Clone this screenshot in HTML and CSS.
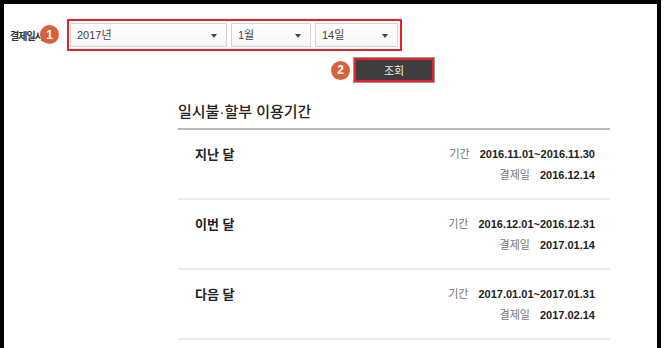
FILE: index.html
```html
<!DOCTYPE html>
<html lang="ko">

<head>
    <meta charset="UTF-8">
    <meta name="viewport" content="width=device-width, initial-scale=1.0">
    <title>일시불·할부 이용기간</title>
    <link rel="stylesheet" href="styles.css">
</head>

<body>
    <div class="frame">
        <div class="filtre">
            <div class="filtre_label">
                결제일시
                <span class="badge badge_un">1</span>
            </div>
            <div class="selects">
                <div class="select select_annee">2017년<span class="fleche"></span></div>
                <div class="select select_mois">1월<span class="fleche"></span></div>
                <div class="select select_jour">14일<span class="fleche"></span></div>
            </div>
        </div>

        <div class="ligne_bouton">
            <span class="badge">2</span>
            <button type="button" class="bouton_recherche">조회</button>
        </div>

        <div class="periodes">
            <h2>일시불·할부 이용기간</h2>

            <div class="periode">
                <div class="periode_nom">지난 달</div>
                <dl class="periode_infos">
                    <div><dt>기간</dt><dd>2016.11.01~2016.11.30</dd></div>
                    <div><dt>결제일</dt><dd>2016.12.14</dd></div>
                </dl>
            </div>

            <div class="periode">
                <div class="periode_nom">이번 달</div>
                <dl class="periode_infos">
                    <div><dt>기간</dt><dd>2016.12.01~2016.12.31</dd></div>
                    <div><dt>결제일</dt><dd>2017.01.14</dd></div>
                </dl>
            </div>

            <div class="periode">
                <div class="periode_nom">다음 달</div>
                <dl class="periode_infos">
                    <div><dt>기간</dt><dd>2017.01.01~2017.01.31</dd></div>
                    <div><dt>결제일</dt><dd>2017.02.14</dd></div>
                </dl>
            </div>
        </div>
    </div>
</body>

</html>
```

FILE: styles.css
```css
body {
    margin: 0;
    font-family: "Liberation Sans", "Noto Sans CJK KR", sans-serif;
    color: #222;
    background-color: #fff;
}

.frame {
    width: 653px;
    height: 337px;
    border: 4px solid #000;
    overflow: hidden;
    padding-top: 15px;
    box-sizing: content-box;
}

.frame > * {
    box-sizing: border-box;
}

/* ligne des selects */
.filtre {
    display: flex;
    align-items: center;
    padding-left: 6px;
}

.filtre_label {
    position: relative;
    width: 57px;
    flex-shrink: 0;
    font-size: 10px;
    font-weight: bold;
    letter-spacing: -1px;
    color: #333;
    white-space: nowrap;
}

.badge {
    display: inline-flex;
    align-items: center;
    justify-content: center;
    width: 19px;
    height: 19px;
    border-radius: 50%;
    background-color: #d9603a;
    color: #fff;
    font-size: 12px;
    font-weight: bold;
    letter-spacing: 0;
}

.badge_un {
    position: absolute;
    left: 30px;
    top: 50%;
    margin-top: -10px;
}

.selects {
    display: flex;
    gap: 4px;
    padding: 2px 2px 2px 1px;
    border: 2px solid #e8202a;
}

.select {
    position: relative;
    height: 24px;
    line-height: 22px;
    padding-left: 6px;
    border: 1px solid #d5d5d5;
    box-sizing: border-box;
    background: linear-gradient(#fff, #f6f6f6);
    font-size: 11px;
    color: #444;
}

.select_annee {
    width: 157px;
}

.select_mois {
    width: 80px;
}

.select_jour {
    width: 83px;
}

.fleche {
    position: absolute;
    right: 9px;
    top: 10px;
    border-left: 3px solid transparent;
    border-right: 3px solid transparent;
    border-top: 4px solid #444;
}

/* bouton */
.ligne_bouton {
    display: flex;
    align-items: center;
    gap: 4px;
    margin-top: 7px;
    padding-left: 327px;
}

.bouton_recherche {
    width: 80px;
    height: 24px;
    padding: 0;
    border: 2px solid #e8202a;
    outline: 1px solid #999;
    background-color: #3e3e3e;
    color: #eee;
    font-family: inherit;
    font-size: 11px;
}

/* liste des periodes */
.periodes {
    width: 432px;
    margin-left: 174px;
}

h2 {
    margin: 20px 0 0;
    padding-bottom: 6px;
    border-bottom: 2px solid #bbb;
    font-size: 15px;
    line-height: 20px;
    font-weight: 500;
    color: #222;
}

.periode {
    display: flex;
    justify-content: space-between;
    height: 70px;
    padding: 14px 15px 0 17px;
    border-bottom: 2px solid #ececec;
    box-sizing: border-box;
}

.periode_nom {
    font-size: 13px;
    line-height: 21px;
    font-weight: bold;
}

.periode_infos {
    display: flex;
    flex-direction: column;
    align-items: flex-end;
    margin: 0;
    line-height: 21px;
}

.periode_infos div {
    display: flex;
    gap: 10px;
}

.periode_infos dt {
    font-size: 11px;
    color: #777;
}

.periode_infos dd {
    margin: 0;
    font-size: 11px;
    font-weight: bold;
    color: #222;
}
```
